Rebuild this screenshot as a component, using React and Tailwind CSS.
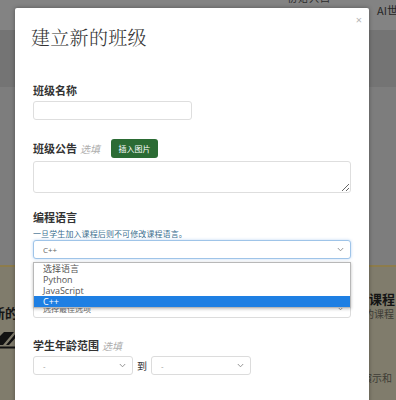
import React from "react";

const Chevron = ({ className = "" }) => (
  <svg width="7" height="5" viewBox="0 0 7 5" className={className}>
    <path d="M0.8 1 L3.5 3.8 L6.2 1" fill="none" stroke="#8a8a8a" strokeWidth="0.9" />
  </svg>
);

const SelectBox = ({ text, w, focused, textColor = "text-[#666]" }) => (
  <div
    className={`flex items-center justify-between h-[19px] rounded-[3px] bg-white px-[9px] ${w} ${
      focused
        ? "border border-[#9fc4e8] shadow-[0_0_3px_rgba(102,160,230,0.45)]"
        : "border border-[#dcdcdc]"
    }`}
  >
    <span className={`text-[8px] leading-none ${textColor}`}>{text}</span>
    <Chevron className="-mr-[3px]" />
  </div>
);

export default function App() {
  const font = { fontFamily: '"Open Sans", "Noto Sans CJK SC", sans-serif' };
  return (
    <div className="relative w-[396px] h-[400px] overflow-hidden" style={font}>
      {/* background page (dimmed by backdrop) */}
      <div className="flex flex-col w-full h-full">
        <div className="h-[30px] bg-[#838383] flex justify-end items-start relative">
          <span className="text-[10px] text-[#2c2c2c] mt-[-10px] mr-[46px] tracking-[1px]" style={{ fontFamily: '"Noto Sans CJK SC", sans-serif' }}>
            初始入口
          </span>
          <span className="text-[11px] text-[#262626] mt-[2px] mr-[-2px] whitespace-nowrap" style={{ fontFamily: '"Noto Sans CJK SC", sans-serif' }}>
            AI世
          </span>
        </div>
        <div className="h-[57px] bg-[#747474]" />
        <div className="h-[178px] bg-[#7d7d7d]" />
        <div className="h-[2px] bg-[#8d7c4c]" />
        <div className="flex-1 bg-[#807c6c] flex justify-between">
          <div className="flex flex-col items-end w-[18px]">
            <span
              className="mt-[38px] text-[13px] font-bold text-[#151515] whitespace-nowrap leading-[16px]"
              style={{ fontFamily: '"Noto Sans CJK SC", sans-serif' }}
            >
              建新的
            </span>
            <svg width="18" height="19" viewBox="0 0 18 19" className="mt-[9px] self-start">
              <polygon points="0,2 14,2 3,15 0,15" fill="#111" />
              <polygon points="6,15 17,2 18,2 18,5 9,15" fill="#111" />
              <polygon points="0,2 4,2 0,6" fill="#807c6c" />
              <rect x="0" y="16.5" width="18" height="2" fill="#111" />
            </svg>
          </div>
          <div
            className="flex flex-col w-[28px] whitespace-nowrap"
            style={{ fontFamily: '"Noto Sans CJK SC", sans-serif' }}
          >
            <span className="mt-[24px] text-[13px] font-bold text-[#141414] leading-[16px] ml-[1px]">课程</span>
            <span className="text-[10px] text-[#3e3c36] leading-[14px] ml-[-4px]">的课程</span>
            <span className="mt-[50px] text-[10px] text-[#3e3c36] leading-[14px] ml-[-6px]">演示和</span>
          </div>
        </div>
      </div>

      {/* modal */}
      <div className="absolute left-[15px] top-[8px] w-[354px] h-[400px] bg-white rounded-t-[2px] shadow-[0_0_4px_rgba(0,0,0,0.35)]">
        <span className="absolute right-[7px] top-[6px] text-[11px] leading-none text-[#b5b5b5]">×</span>
        <div className="flex flex-col pt-[17px] px-[18px]">
          <div
            className="h-[24px] leading-[24px] text-[19px] font-light text-[#333] -ml-[2px] tracking-[0.3px]"
            style={{ fontFamily: '"Noto Serif CJK SC", "Noto Sans CJK SC", serif' }}
          >
            建立新的班级
          </div>

          <div className="mt-[34px] h-[14px] leading-[14px] text-[11px] font-bold text-[#333]" style={{ fontFamily: '"Noto Sans CJK SC", sans-serif' }}>
            班级名称
          </div>
          <div className="mt-[4px] w-[159px] h-[19px] border border-[#dedede] rounded-[3px]" />

          <div className="mt-[19px] h-[19px] flex items-center" style={{ fontFamily: '"Noto Sans CJK SC", sans-serif' }}>
            <span className="text-[11px] font-bold text-[#333]">班级公告</span>
            <span className="ml-[3px] text-[10px] italic text-[#adadad]">选填</span>
            <span className="ml-[11px] h-[19px] w-[47px] rounded-[3px] bg-[#2b6b34] text-white text-[8px] flex items-center justify-center">
              插入图片
            </span>
          </div>
          <textarea className="mt-[3px] w-[318px] h-[32px] border border-[#dedede] rounded-[3px] resize-y outline-none" readOnly />

          <div className="mt-[17px] h-[14px] leading-[14px] text-[11px] font-bold text-[#333]" style={{ fontFamily: '"Noto Sans CJK SC", sans-serif' }}>
            编程语言
          </div>
          <div className="mt-[4px] h-[11px] leading-[11px] text-[8px] text-[#3a6f8f] tracking-[0.1px]" style={{ fontFamily: '"Noto Sans CJK SC", sans-serif' }}>
            一旦学生加入课程后则不可修改课程语言。
          </div>
          <div className="mt-[1px]">
            <SelectBox text="C++" w="w-[318px]" focused />
          </div>

          <div className="mt-[40px]">
            <SelectBox text="选择最佳选项" w="w-[318px]" />
          </div>

          <div className="mt-[20px] h-[14px] flex items-center" style={{ fontFamily: '"Noto Sans CJK SC", sans-serif' }}>
            <span className="text-[11px] font-bold text-[#333]">学生年龄范围</span>
            <span className="ml-[3px] text-[10px] italic text-[#adadad]">选填</span>
          </div>
          <div className="mt-[4px] flex items-center">
            <SelectBox text="-" w="w-[100px]" textColor="text-[#999]" />
            <span className="mx-[4px] text-[10px] text-[#333]" style={{ fontFamily: '"Noto Sans CJK SC", sans-serif' }}>到</span>
            <SelectBox text="-" w="w-[100px]" textColor="text-[#999]" />
          </div>
        </div>

        {/* open dropdown list */}
        <div className="absolute left-[18px] top-[254px] w-[318px] bg-white border border-[#b8b8b8] shadow-[0_1px_3px_rgba(0,0,0,0.25)] flex flex-col text-[9px] text-[#555]">
          <div className="h-[11px] leading-[11px] pl-[9px]" style={{ fontFamily: '"Noto Sans CJK SC", sans-serif' }}>选择语言</div>
          <div className="h-[11px] leading-[11px] pl-[9px]">Python</div>
          <div className="h-[11px] leading-[11px] pl-[9px]">JavaScript</div>
          <div className="h-[11px] leading-[11px] pl-[9px] bg-[#1e7fe3] text-white">C++</div>
        </div>
      </div>
    </div>
  );
}
